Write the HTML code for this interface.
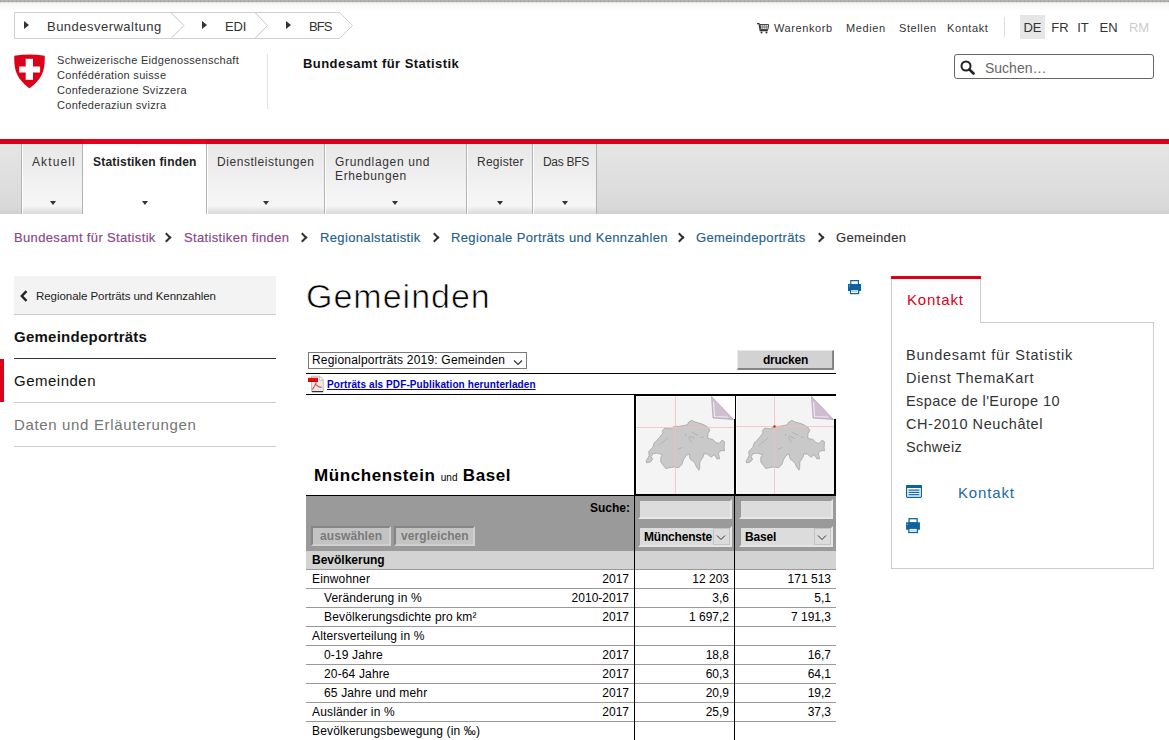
<!DOCTYPE html>
<html><head><meta charset="utf-8">
<style>
*{margin:0;padding:0;box-sizing:border-box}
html,body{width:1169px;height:740px;overflow:hidden;background:#fff}
body{font-family:"Liberation Sans",sans-serif;color:#333;position:relative}
.fr{-webkit-text-stroke:.15px currentColor}
.a{position:absolute;white-space:nowrap}
#topband{position:absolute;left:0;top:0;width:1169px;height:3px;background:linear-gradient(#b4b2ad 0,#b4b2ad 2px,#e6e6e6 2px)}
#topdots{position:absolute;left:0;top:1px;width:1169px;height:1px;background:repeating-linear-gradient(90deg,#9c9a95 0 1px,#b2b0ab 1px 4px)}
#topgrad{position:absolute;left:0;top:3px;width:1169px;height:8px;background:linear-gradient(#f5f5f5,#fff)}
/* top breadcrumb */
.tb{position:absolute;top:12px;height:27px}
.tbtxt{position:absolute;top:19px;font-size:13px;color:#333;letter-spacing:.48px;line-height:16px}
.tri{position:absolute;top:21px;width:0;height:0;border-top:4px solid transparent;border-bottom:4px solid transparent;border-left:5.5px solid #333}
/* logo */
.logot{position:absolute;left:57px;font-size:11px;letter-spacing:.3px;color:#333;line-height:15px}
/* meta nav */
.meta{position:absolute;top:21px;font-size:11px;color:#333;line-height:14px;letter-spacing:.6px}
.lang{position:absolute;top:15px;height:24px;padding-top:2px;font-size:13px;line-height:22px;text-align:center;color:#333}
/* main nav */
#redline{position:absolute;left:0;top:139px;width:1169px;height:5px;background:#d8001b}
#navbg{position:absolute;left:0;top:144px;width:1169px;height:70px;background:linear-gradient(#e5e5e5,#d9d9d9 90%,#cfcfcf);}
.tab{position:absolute;top:144px;height:70px;background:linear-gradient(#e8e8e8,#f6f6f6 88%,#dadada);border-left:1px solid #b3b3b3;box-shadow:inset 1px 0 0 #fff}
.tab span{position:absolute;left:10px;top:11px;font-size:12px;line-height:14px;color:#333;letter-spacing:.55px;white-space:nowrap}
.tab i{position:absolute;top:57px;width:0;height:0;border-left:3.5px solid transparent;border-right:3.5px solid transparent;border-top:4px solid #333}
/* breadcrumb */
.bc{position:absolute;top:230px;font-size:13px;line-height:16px;letter-spacing:.35px;white-space:nowrap}
.chev{position:absolute;top:234px;width:7px;height:7px;border-right:2px solid #333;border-top:2px solid #333;transform:rotate(45deg)}
</style></head><body>
<div id="topband"></div><div id="topdots"></div><div id="topgrad"></div>

<!-- top breadcrumb boxes -->
<svg class="a" style="left:13px;top:11px" width="345" height="29" viewBox="0 0 345 29">
  <path d="M1.5 1.5 H158 L171 14.5 L158 27.5 H1.5 Z" fill="#fff" stroke="#cfcfcf" stroke-width="1"/>
  <path d="M158 1.5 H242 L254.5 14.5 L242 27.5 H158 L171 14.5 Z" fill="#fff" stroke="#cfcfcf" stroke-width="1"/>
  <path d="M242 1.5 H326.5 L339.5 14.5 L326.5 27.5 H242 L254.5 14.5 Z" fill="#fff" stroke="#cfcfcf" stroke-width="1"/>
</svg>
<div class="tri" style="left:24px"></div>
<div class="tbtxt" style="left:47px">Bundesverwaltung</div>
<div class="tri" style="left:202px"></div>
<div class="tbtxt" style="left:225px;letter-spacing:-.2px">EDI</div>
<div class="tri" style="left:286px"></div>
<div class="tbtxt" style="left:309px;letter-spacing:-.9px">BFS</div>

<!-- logo -->
<svg class="a" style="left:14px;top:54px" width="31" height="34" viewBox="0 0 31 34">
  <path d="M0.3 1.8 Q15.5 -0.8 30.7 1.8 C31.2 15 29 24.5 15.5 34.3 C2 24.5 -0.2 15 0.3 1.8 Z" fill="#dc0018"/>
  <rect x="11.7" y="4.8" width="7.3" height="21" fill="#fff"/>
  <rect x="5.2" y="12.5" width="20.9" height="6" fill="#fff"/>
</svg>
<div class="logot" style="top:53px">Schweizerische Eidgenossenschaft</div>
<div class="logot" style="top:68px">Confédération suisse</div>
<div class="logot" style="top:83px">Confederazione Svizzera</div>
<div class="logot" style="top:98px">Confederaziun svizra</div>
<div class="a" style="left:267px;top:54px;width:1px;height:55px;background:#e3e3e3"></div>
<div class="a" style="left:303px;top:56px;font-size:13px;font-weight:bold;color:#111;letter-spacing:.45px">Bundesamt für Statistik</div>

<!-- meta nav -->
<svg class="a" style="left:756px;top:22px" width="14" height="12" viewBox="0 0 14 12">
  <path d="M1 1.6 H3 L4.2 8.6 H11.8" fill="none" stroke="#333" stroke-width="1.2"/>
  <path d="M4 2.6 H12.6 L11.9 7.6 H4.8 Z" fill="#fff" stroke="#333" stroke-width="1"/>
  <path d="M4.3 5 H12.3 M6.2 2.6 V7.6 M8.2 2.6 V7.6 M10.2 2.6 V7.6" stroke="#555" stroke-width=".7"/>
  <circle cx="5.5" cy="10.5" r="1" fill="#333"/><circle cx="10.5" cy="10.5" r="1" fill="#333"/>
</svg>
<div class="meta" style="left:774px">Warenkorb</div>
<div class="meta" style="left:846px">Medien</div>
<div class="meta" style="left:899px">Stellen</div>
<div class="meta" style="left:947px">Kontakt</div>
<div class="a" style="left:1004px;top:17px;width:1px;height:20px;background:#ddd"></div>
<div class="lang" style="left:1020px;width:25px;background:#e6e6e6">DE</div>
<div class="lang" style="left:1048px;width:24px">FR</div>
<div class="lang" style="left:1073px;width:20px">IT</div>
<div class="lang" style="left:1096px;width:25px">EN</div>
<div class="lang" style="left:1125px;width:28px;color:#ccc">RM</div>

<!-- search -->
<div class="a" style="left:954px;top:54px;width:200px;height:25px;border:1px solid #666;border-radius:3px"></div>
<svg class="a" style="left:960px;top:60px" width="15" height="15" viewBox="0 0 15 15">
  <circle cx="6" cy="6" r="4.5" fill="none" stroke="#222" stroke-width="2"/>
  <path d="M9.3 9.3 L13.5 13.5" stroke="#222" stroke-width="2.6" stroke-linecap="round"/>
</svg>
<div class="a" style="left:985px;top:60px;font-size:14px;line-height:16px;color:#666;letter-spacing:0">Suchen…</div>

<!-- main nav -->
<div id="redline"></div>
<div id="navbg"></div>
<div class="a" style="left:83px;top:139px;width:123px;height:5px;background:#e8001e"></div>
<div class="tab" style="left:21px;width:62px"><span style="letter-spacing:1.1px">Aktuell</span><i style="left:28px"></i></div>
<div class="tab" style="left:82px;width:124px;background:#fff;box-shadow:none"><span style="font-weight:bold;color:#222;letter-spacing:.2px">Statistiken finden</span><i style="left:59px"></i></div>
<div class="tab" style="left:206px;width:118px"><span>Dienstleistungen</span><i style="left:56px"></i></div>
<div class="tab" style="left:324px;width:142px"><span style="letter-spacing:.65px">Grundlagen und<br>Erhebungen</span><i style="left:67px"></i></div>
<div class="tab" style="left:466px;width:66px"><span style="letter-spacing:.25px">Register</span><i style="left:30px"></i></div>
<div class="tab" style="left:532px;width:65px;border-right:1px solid #b3b3b3"><span style="letter-spacing:-.3px">Das BFS</span><i style="left:29px"></i></div>

<!-- breadcrumb -->
<div class="bc fr" style="left:14px;color:#8b4586">Bundesamt für Statistik</div>
<div class="chev" style="left:163px"></div>
<div class="bc fr" style="left:184px;color:#8b4586">Statistiken finden</div>
<div class="chev" style="left:299px"></div>
<div class="bc fr" style="left:320px;color:#1f5f8c">Regionalstatistik</div>
<div class="chev" style="left:431px"></div>
<div class="bc fr" style="left:451px;color:#1f5f8c">Regionale Porträts und Kennzahlen</div>
<div class="chev" style="left:676px"></div>
<div class="bc fr" style="left:696px;color:#1f5f8c">Gemeindeporträts</div>
<div class="chev" style="left:816px"></div>
<div class="bc fr" style="left:836px;color:#333">Gemeinden</div>

<!--LEFT-->
<div class="a" style="left:14px;top:276px;width:262px;height:39px;background:#f3f3f3;border-bottom:1px solid #ccc"></div>
<svg class="a" style="left:19px;top:290px" width="10" height="12" viewBox="0 0 10 12"><path d="M7.5 1.2 L2.8 6 L7.5 10.8" fill="none" stroke="#222" stroke-width="2.4"/></svg>
<div class="a" style="left:36px;top:289px;font-size:11.5px;line-height:14px;color:#222;letter-spacing:-.05px">Regionale Porträts und Kennzahlen</div>
<div class="a" style="left:14px;top:328px;font-size:15px;line-height:17px;font-weight:bold;color:#111;letter-spacing:.25px">Gemeindeporträts</div>
<div class="a" style="left:14px;top:358px;width:262px;height:1px;background:#333"></div>
<div class="a" style="left:0;top:359px;width:4px;height:43px;background:#dc0018"></div>
<div class="a" style="left:14px;top:372px;font-size:15px;line-height:17px;color:#111;letter-spacing:.5px">Gemeinden</div>
<div class="a" style="left:14px;top:402px;width:262px;height:1px;background:#ccc"></div>
<div class="a" style="left:14px;top:416px;font-size:15px;line-height:17px;color:#757575;letter-spacing:.65px">Daten und Erläuterungen</div>
<div class="a" style="left:14px;top:446px;width:262px;height:1px;background:#ccc"></div>

<!--MAIN-->
<div class="a" style="left:306px;top:276px;font-size:34px;line-height:40px;color:#000;letter-spacing:1px;-webkit-text-stroke:.7px #fff">Gemeinden</div>
<svg class="a" style="left:847px;top:279px" width="15" height="16" viewBox="0 0 15 16">
  <rect x="3.8" y="1.6" width="7.6" height="4" fill="#fff" stroke="#0b62a0" stroke-width="1.2"/>
  <rect x="1" y="5" width="13" height="7" fill="#0b62a0"/>
  <rect x="2" y="6.5" width="1" height="1" fill="#8fb6d4"/>
  <rect x="3.6" y="10.6" width="8" height="4" fill="#fff" stroke="#0b62a0" stroke-width="1.2"/>
  <rect x="5" y="12" width="5" height="1" fill="#b9c6db"/>
</svg>
<!-- select -->
<div class="a" style="left:308px;top:352px;width:219px;height:17px;border:1px solid #7a7a7a;background:#fff"></div>
<div class="a" style="left:312px;top:353px;font-size:12px;line-height:14px;color:#000;letter-spacing:.2px">Regionalporträts 2019: Gemeinden</div>
<svg class="a" style="left:513px;top:359px" width="10" height="7" viewBox="0 0 10 7"><path d="M1 1.5 L5 5.5 L9 1.5" fill="none" stroke="#333" stroke-width="1.2"/></svg>
<div class="a" style="left:737px;top:350px;width:97px;height:20px;background:#d2d2d2;border-style:solid;border-width:1px 2px 2px 1px;border-color:#e8e8e8 #858585 #858585 #e8e8e8"></div>
<div class="a" style="left:737px;top:353px;width:97px;text-align:center;font-size:12px;line-height:15px;font-weight:bold;color:#000;letter-spacing:-.25px">drucken</div>
<div class="a" style="left:306px;top:373px;width:530px;height:1px;background:#000"></div>
<svg class="a" style="left:304px;top:374px" width="26" height="20" viewBox="0 0 26 20">
  <path d="M7.5 2.2 H15.6 L19.3 5.9 V17.6 H7.5 Z" fill="#e9e9e9" stroke="#b5b5b5" stroke-width=".8"/>
  <path d="M15.4 2.2 L19.3 6.1 H15.4 Z" fill="#fff" stroke="#aaa" stroke-width=".6"/>
  <rect x="8" y="17" width="11" height="1.2" fill="#333"/>
  <rect x="4" y="3.8" width="10" height="4" fill="#f00a0a"/>
  <rect x="4" y="6.8" width="10" height="1" fill="#a80000"/>
  <path d="M8.3 15.6 Q10.8 12.3 12.4 8.3 M12.3 10.5 Q13.2 12.6 17.6 13.4" fill="none" stroke="#e8484a" stroke-width="1.1"/>
</svg>
<div class="a" style="left:327px;top:379px;font-size:10px;line-height:12px;font-weight:bold;color:#00c;text-decoration:underline;letter-spacing:.1px">Porträts als PDF-Publikation herunterladen</div>
<div class="a" style="left:306px;top:394px;width:530px;height:1px;background:#000"></div>
<!--TABLE-->
<div class="a" style="left:314px;top:466px;font-size:17px;line-height:20px;font-weight:bold;color:#000;letter-spacing:.6px">Münchenstein <span style="font-size:10px;font-weight:normal;letter-spacing:0">und</span> Basel</div>
<div class="a" style="left:306px;top:495px;width:530px;height:1px;background:#000"></div>
<div class="a" style="left:634px;top:394px;width:202px;height:102px;border:2px solid #000;background:#fff"></div>
<div class="a" style="left:734px;top:394px;width:2px;height:102px;background:#000"></div>
<svg class="a" style="left:636px;top:396px" width="98" height="98" viewBox="0 0 98 98">
<rect x="0" y="0" width="98" height="98" fill="#fff"/>
<rect x="1" y="1" width="97" height="97" fill="#f4f4f4"/>
<path d="M13.1 59.6 L12.7 55.5 L16.7 51.4 L18.4 46.6 L20.4 45.0 L23.2 41.7 L26.9 37.2 L26.5 34.4 L28.9 32.0 L31.3 32.4 L34.6 32.8 L38.2 30.4 L42.7 30.4 L47.6 29.5 L51.6 28.7 L52.4 26.3 L55.7 24.3 L58.9 25.9 L63.0 27.1 L67.0 28.3 L71.9 31.2 L73.9 34.4 L71.9 37.7 L71.9 42.5 L76.7 43.3 L80.0 46.6 L83.2 47.4 L86.1 44.1 L88.5 45.8 L88.1 51.4 L88.5 54.7 L84.9 54.7 L82.4 57.1 L83.6 62.8 L80.8 62.8 L78.4 58.7 L75.1 61.2 L71.1 57.9 L67.8 57.9 L67.0 61.2 L63.8 66.0 L63.8 70.9 L63.0 74.2 L60.5 70.9 L58.9 66.9 L54.0 62.8 L53.2 57.9 L50.0 59.6 L47.6 63.6 L45.9 68.5 L42.7 71.7 L37.8 70.9 L33.8 71.7 L29.7 72.5 L27.3 69.3 L24.8 66.0 L24.8 61.2 L26.5 58.7 L20.8 57.1 L16.7 57.9 L15.1 60.8 L16.7 63.2 L14.3 66.0 L10.6 66.9 L10.1 64.8 L11.9 62.0 Z" fill="#c9c9c9" stroke="#9d9d9d" stroke-width=".7" stroke-linejoin="round"/>
<path d="M22.4 49.8 L32.1 41.7 M55.7 36.0 L62.2 39.3 M64.6 41.3 L67.8 41.3 M49.2 37.7 L50.0 40.1 M41.9 53.1 L46.7 51.4 M52.4 40.9 L55.7 46.6 M53.2 40.1 L58.9 42.5" fill="none" stroke="#a5a5a5" stroke-width=".6"/>
<rect x="39" y="0" width="1" height="98" fill="#f4bcbc" fill-opacity=".75"/>
<rect x="0" y="31" width="98" height="1" fill="#f4bcbc" fill-opacity=".75"/>

<path d="M75 0 H98 V24 Z" fill="#fff"/>
<path d="M75.5 0.5 L97.5 23.5 L77 22 Z" fill="#cdbfd0" stroke="#b7a3b3" stroke-width=".8" stroke-linejoin="round"/>
<path d="M77.5 6 L78.5 20.5 L92 21" fill="none" stroke="#efe8f2" stroke-width="1.2"/>
</svg>
<svg class="a" style="left:736px;top:396px" width="98" height="98" viewBox="0 0 98 98">
<rect x="0" y="0" width="98" height="98" fill="#fff"/>
<rect x="1" y="1" width="97" height="97" fill="#f4f4f4"/>
<path d="M13.1 59.6 L12.7 55.5 L16.7 51.4 L18.4 46.6 L20.4 45.0 L23.2 41.7 L26.9 37.2 L26.5 34.4 L28.9 32.0 L31.3 32.4 L34.6 32.8 L38.2 30.4 L42.7 30.4 L47.6 29.5 L51.6 28.7 L52.4 26.3 L55.7 24.3 L58.9 25.9 L63.0 27.1 L67.0 28.3 L71.9 31.2 L73.9 34.4 L71.9 37.7 L71.9 42.5 L76.7 43.3 L80.0 46.6 L83.2 47.4 L86.1 44.1 L88.5 45.8 L88.1 51.4 L88.5 54.7 L84.9 54.7 L82.4 57.1 L83.6 62.8 L80.8 62.8 L78.4 58.7 L75.1 61.2 L71.1 57.9 L67.8 57.9 L67.0 61.2 L63.8 66.0 L63.8 70.9 L63.0 74.2 L60.5 70.9 L58.9 66.9 L54.0 62.8 L53.2 57.9 L50.0 59.6 L47.6 63.6 L45.9 68.5 L42.7 71.7 L37.8 70.9 L33.8 71.7 L29.7 72.5 L27.3 69.3 L24.8 66.0 L24.8 61.2 L26.5 58.7 L20.8 57.1 L16.7 57.9 L15.1 60.8 L16.7 63.2 L14.3 66.0 L10.6 66.9 L10.1 64.8 L11.9 62.0 Z" fill="#c9c9c9" stroke="#9d9d9d" stroke-width=".7" stroke-linejoin="round"/>
<path d="M22.4 49.8 L32.1 41.7 M55.7 36.0 L62.2 39.3 M64.6 41.3 L67.8 41.3 M49.2 37.7 L50.0 40.1 M41.9 53.1 L46.7 51.4 M52.4 40.9 L55.7 46.6 M53.2 40.1 L58.9 42.5" fill="none" stroke="#a5a5a5" stroke-width=".6"/>
<rect x="38" y="0" width="1" height="98" fill="#f4bcbc" fill-opacity=".75"/>
<rect x="0" y="30" width="98" height="1" fill="#f4bcbc" fill-opacity=".75"/>
<rect x="37.5" y="29.5" width="2" height="2" fill="#e00"/>
<path d="M75 0 H98 V24 Z" fill="#fff"/>
<path d="M75.5 0.5 L97.5 23.5 L77 22 Z" fill="#cdbfd0" stroke="#b7a3b3" stroke-width=".8" stroke-linejoin="round"/>
<path d="M77.5 6 L78.5 20.5 L92 21" fill="none" stroke="#efe8f2" stroke-width="1.2"/>
</svg>
<div class="a" style="left:734px;top:419px;width:1px;height:75px;background:#000"></div>
<div class="a" style="left:834px;top:419px;width:2px;height:75px;background:#000"></div>
<div class="a" style="left:834px;top:396px;width:2px;height:23px;background:#fff"></div>
<div class="a" style="left:734px;top:396px;width:1px;height:23px;background:#fff"></div>
<div class="a" style="left:306px;top:496px;width:530px;height:55px;background:#9a9a9a"></div>
<div class="a" style="right:539px;top:501px;font-size:12px;line-height:14px;font-weight:bold;color:#000;letter-spacing:0">Suche:</div>
<div class="a" style="left:311px;top:526px;width:80px;height:20px;background:#c3c3c3;border:2px solid;border-color:#858585 #d0d0d0 #d0d0d0 #858585"></div>
<div class="a" style="left:320px;top:529px;font-size:12px;line-height:14px;font-weight:bold;color:#7a7a7a;letter-spacing:.1px">auswählen</div>
<div class="a" style="left:394px;top:526px;width:81px;height:20px;background:#c3c3c3;border:2px solid;border-color:#858585 #d0d0d0 #d0d0d0 #858585"></div>
<div class="a" style="left:401px;top:529px;font-size:12px;line-height:14px;font-weight:bold;color:#7a7a7a;letter-spacing:.1px">vergleichen</div>
<div class="a" style="left:638px;top:499px;width:94px;height:20px;background:#dcdcdc;border:2px solid;border-color:#9a9a9a #e6e6e6 #e6e6e6 #9a9a9a"></div>
<div class="a" style="left:638px;top:526px;width:94px;height:21px;background:#dcdcdc;border:2px solid;border-color:#9a9a9a #e6e6e6 #e6e6e6 #9a9a9a"></div>
<div class="a" style="left:644px;top:530px;width:69px;overflow:hidden;font-size:12px;line-height:14px;font-weight:bold;color:#000;letter-spacing:-.2px">Münchenste</div>
<div class="a" style="left:713px;top:528px;width:17px;height:17px;border:1px solid #c4c4c4;background:#dcdcdc"></div>
<svg class="a" style="left:716px;top:534px" width="10" height="7" viewBox="0 0 10 7"><path d="M1 1.5 L5 5.5 L9 1.5" fill="none" stroke="#333" stroke-width="1"/></svg>
<div class="a" style="left:739px;top:499px;width:94px;height:20px;background:#dcdcdc;border:2px solid;border-color:#9a9a9a #e6e6e6 #e6e6e6 #9a9a9a"></div>
<div class="a" style="left:739px;top:526px;width:94px;height:21px;background:#dcdcdc;border:2px solid;border-color:#9a9a9a #e6e6e6 #e6e6e6 #9a9a9a"></div>
<div class="a" style="left:745px;top:530px;width:69px;overflow:hidden;font-size:12px;line-height:14px;font-weight:bold;color:#000;letter-spacing:-.2px">Basel</div>
<div class="a" style="left:814px;top:528px;width:17px;height:17px;border:1px solid #c4c4c4;background:#dcdcdc"></div>
<svg class="a" style="left:817px;top:534px" width="10" height="7" viewBox="0 0 10 7"><path d="M1 1.5 L5 5.5 L9 1.5" fill="none" stroke="#333" stroke-width="1"/></svg>
<div class="a" style="left:306px;top:551px;width:530px;height:18px;background:#d3d3d3"></div>
<div class="a" style="left:312px;top:553px;font-size:12px;line-height:14px;font-weight:bold;color:#000">Bevölkerung</div>
<div class="a" style="left:306px;top:569px;width:530px;height:1px;background:#999"></div>
<div class="a" style="left:312px;top:572px;font-size:12px;line-height:14px;color:#000;letter-spacing:.15px">Einwohner</div>
<div class="a" style="right:540px;top:572px;font-size:12px;line-height:14px;color:#000">2017</div>
<div class="a" style="right:440px;top:572px;font-size:12px;line-height:14px;color:#000">12 203</div>
<div class="a" style="right:338px;top:572px;font-size:12px;line-height:14px;color:#000">171 513</div>
<div class="a" style="left:306px;top:588px;width:530px;height:1px;background:#999"></div>
<div class="a" style="left:324px;top:591px;font-size:12px;line-height:14px;color:#000;letter-spacing:.15px">Veränderung in %</div>
<div class="a" style="right:540px;top:591px;font-size:12px;line-height:14px;color:#000">2010-2017</div>
<div class="a" style="right:440px;top:591px;font-size:12px;line-height:14px;color:#000">3,6</div>
<div class="a" style="right:338px;top:591px;font-size:12px;line-height:14px;color:#000">5,1</div>
<div class="a" style="left:306px;top:607px;width:530px;height:1px;background:#999"></div>
<div class="a" style="left:324px;top:610px;font-size:12px;line-height:14px;color:#000;letter-spacing:.15px">Bevölkerungsdichte pro km²</div>
<div class="a" style="right:540px;top:610px;font-size:12px;line-height:14px;color:#000">2017</div>
<div class="a" style="right:440px;top:610px;font-size:12px;line-height:14px;color:#000">1 697,2</div>
<div class="a" style="right:338px;top:610px;font-size:12px;line-height:14px;color:#000">7 191,3</div>
<div class="a" style="left:306px;top:626px;width:530px;height:1px;background:#999"></div>
<div class="a" style="left:312px;top:629px;font-size:12px;line-height:14px;color:#000;letter-spacing:.15px">Altersverteilung in %</div>
<div class="a" style="left:306px;top:645px;width:530px;height:1px;background:#999"></div>
<div class="a" style="left:324px;top:648px;font-size:12px;line-height:14px;color:#000;letter-spacing:.15px">0-19 Jahre</div>
<div class="a" style="right:540px;top:648px;font-size:12px;line-height:14px;color:#000">2017</div>
<div class="a" style="right:440px;top:648px;font-size:12px;line-height:14px;color:#000">18,8</div>
<div class="a" style="right:338px;top:648px;font-size:12px;line-height:14px;color:#000">16,7</div>
<div class="a" style="left:306px;top:664px;width:530px;height:1px;background:#999"></div>
<div class="a" style="left:324px;top:667px;font-size:12px;line-height:14px;color:#000;letter-spacing:.15px">20-64 Jahre</div>
<div class="a" style="right:540px;top:667px;font-size:12px;line-height:14px;color:#000">2017</div>
<div class="a" style="right:440px;top:667px;font-size:12px;line-height:14px;color:#000">60,3</div>
<div class="a" style="right:338px;top:667px;font-size:12px;line-height:14px;color:#000">64,1</div>
<div class="a" style="left:306px;top:683px;width:530px;height:1px;background:#999"></div>
<div class="a" style="left:324px;top:686px;font-size:12px;line-height:14px;color:#000;letter-spacing:.15px">65 Jahre und mehr</div>
<div class="a" style="right:540px;top:686px;font-size:12px;line-height:14px;color:#000">2017</div>
<div class="a" style="right:440px;top:686px;font-size:12px;line-height:14px;color:#000">20,9</div>
<div class="a" style="right:338px;top:686px;font-size:12px;line-height:14px;color:#000">19,2</div>
<div class="a" style="left:306px;top:702px;width:530px;height:1px;background:#999"></div>
<div class="a" style="left:312px;top:705px;font-size:12px;line-height:14px;color:#000;letter-spacing:.15px">Ausländer in %</div>
<div class="a" style="right:540px;top:705px;font-size:12px;line-height:14px;color:#000">2017</div>
<div class="a" style="right:440px;top:705px;font-size:12px;line-height:14px;color:#000">25,9</div>
<div class="a" style="right:338px;top:705px;font-size:12px;line-height:14px;color:#000">37,3</div>
<div class="a" style="left:306px;top:721px;width:530px;height:1px;background:#999"></div>
<div class="a" style="left:312px;top:724px;font-size:12px;line-height:14px;color:#000;letter-spacing:.15px">Bevölkerungsbewegung (in ‰)</div>
<div class="a" style="left:634px;top:496px;width:1px;height:244px;background:#000"></div>
<div class="a" style="left:734px;top:496px;width:1px;height:244px;background:#000"></div>
<!--/TABLE-->

<!--RIGHT-->
<div class="a" style="left:891px;top:322px;width:263px;height:247px;border:1px solid #ccc"></div>
<div class="a" style="left:891px;top:276px;width:90px;height:47px;background:#fff;border-left:1px solid #ccc;border-right:1px solid #ccc"></div>
<div class="a" style="left:891px;top:276px;width:90px;height:3px;background:#dc0018"></div>
<div class="a" style="left:907px;top:291px;font-size:15px;line-height:17px;color:#dc0018;letter-spacing:.85px">Kontakt</div>
<div class="a" style="left:906px;top:347px;font-size:14.5px;line-height:17px;color:#333;letter-spacing:.78px">Bundesamt für Statistik</div>
<div class="a" style="left:906px;top:370px;font-size:14.5px;line-height:17px;color:#333;letter-spacing:.73px">Dienst ThemaKart</div>
<div class="a" style="left:906px;top:393px;font-size:14.5px;line-height:17px;color:#333;letter-spacing:.4px">Espace de l'Europe 10</div>
<div class="a" style="left:906px;top:416px;font-size:14.5px;line-height:17px;color:#333;letter-spacing:.57px">CH-2010 Neuchâtel</div>
<div class="a" style="left:906px;top:439px;font-size:14.5px;line-height:17px;color:#333;letter-spacing:.29px">Schweiz</div>
<svg class="a" style="left:906px;top:485px" width="16" height="13" viewBox="0 0 16 13">
  <rect x="0.6" y="0.6" width="14.8" height="11.8" rx="1.2" fill="#fff" stroke="#0b62a0" stroke-width="1.2"/>
  <rect x="0" y="0" width="16" height="3" rx="1" fill="#0b62a0"/>
  <rect x="2.5" y="4.5" width="11" height="1.2" fill="#0b62a0"/><rect x="2.5" y="6.8" width="11" height="1.2" fill="#0b62a0"/><rect x="2.5" y="9.1" width="11" height="1.2" fill="#0b62a0"/>
</svg>
<div class="a" style="left:958px;top:484px;font-size:15px;line-height:17px;color:#1b6aa1;letter-spacing:.85px">Kontakt</div>
<svg class="a" style="left:905px;top:517px" width="16" height="17" viewBox="0 0 15 16">
  <rect x="3.8" y="1.6" width="7.6" height="4" fill="#fff" stroke="#0b62a0" stroke-width="1.2"/>
  <rect x="1" y="5" width="13" height="7" fill="#0b62a0"/>
  <rect x="2" y="6.5" width="1" height="1" fill="#8fb6d4"/>
  <rect x="3.6" y="10.6" width="8" height="4" fill="#fff" stroke="#0b62a0" stroke-width="1.2"/>
  <rect x="5" y="12" width="5" height="1" fill="#b9c6db"/>
</svg>
</body></html>
